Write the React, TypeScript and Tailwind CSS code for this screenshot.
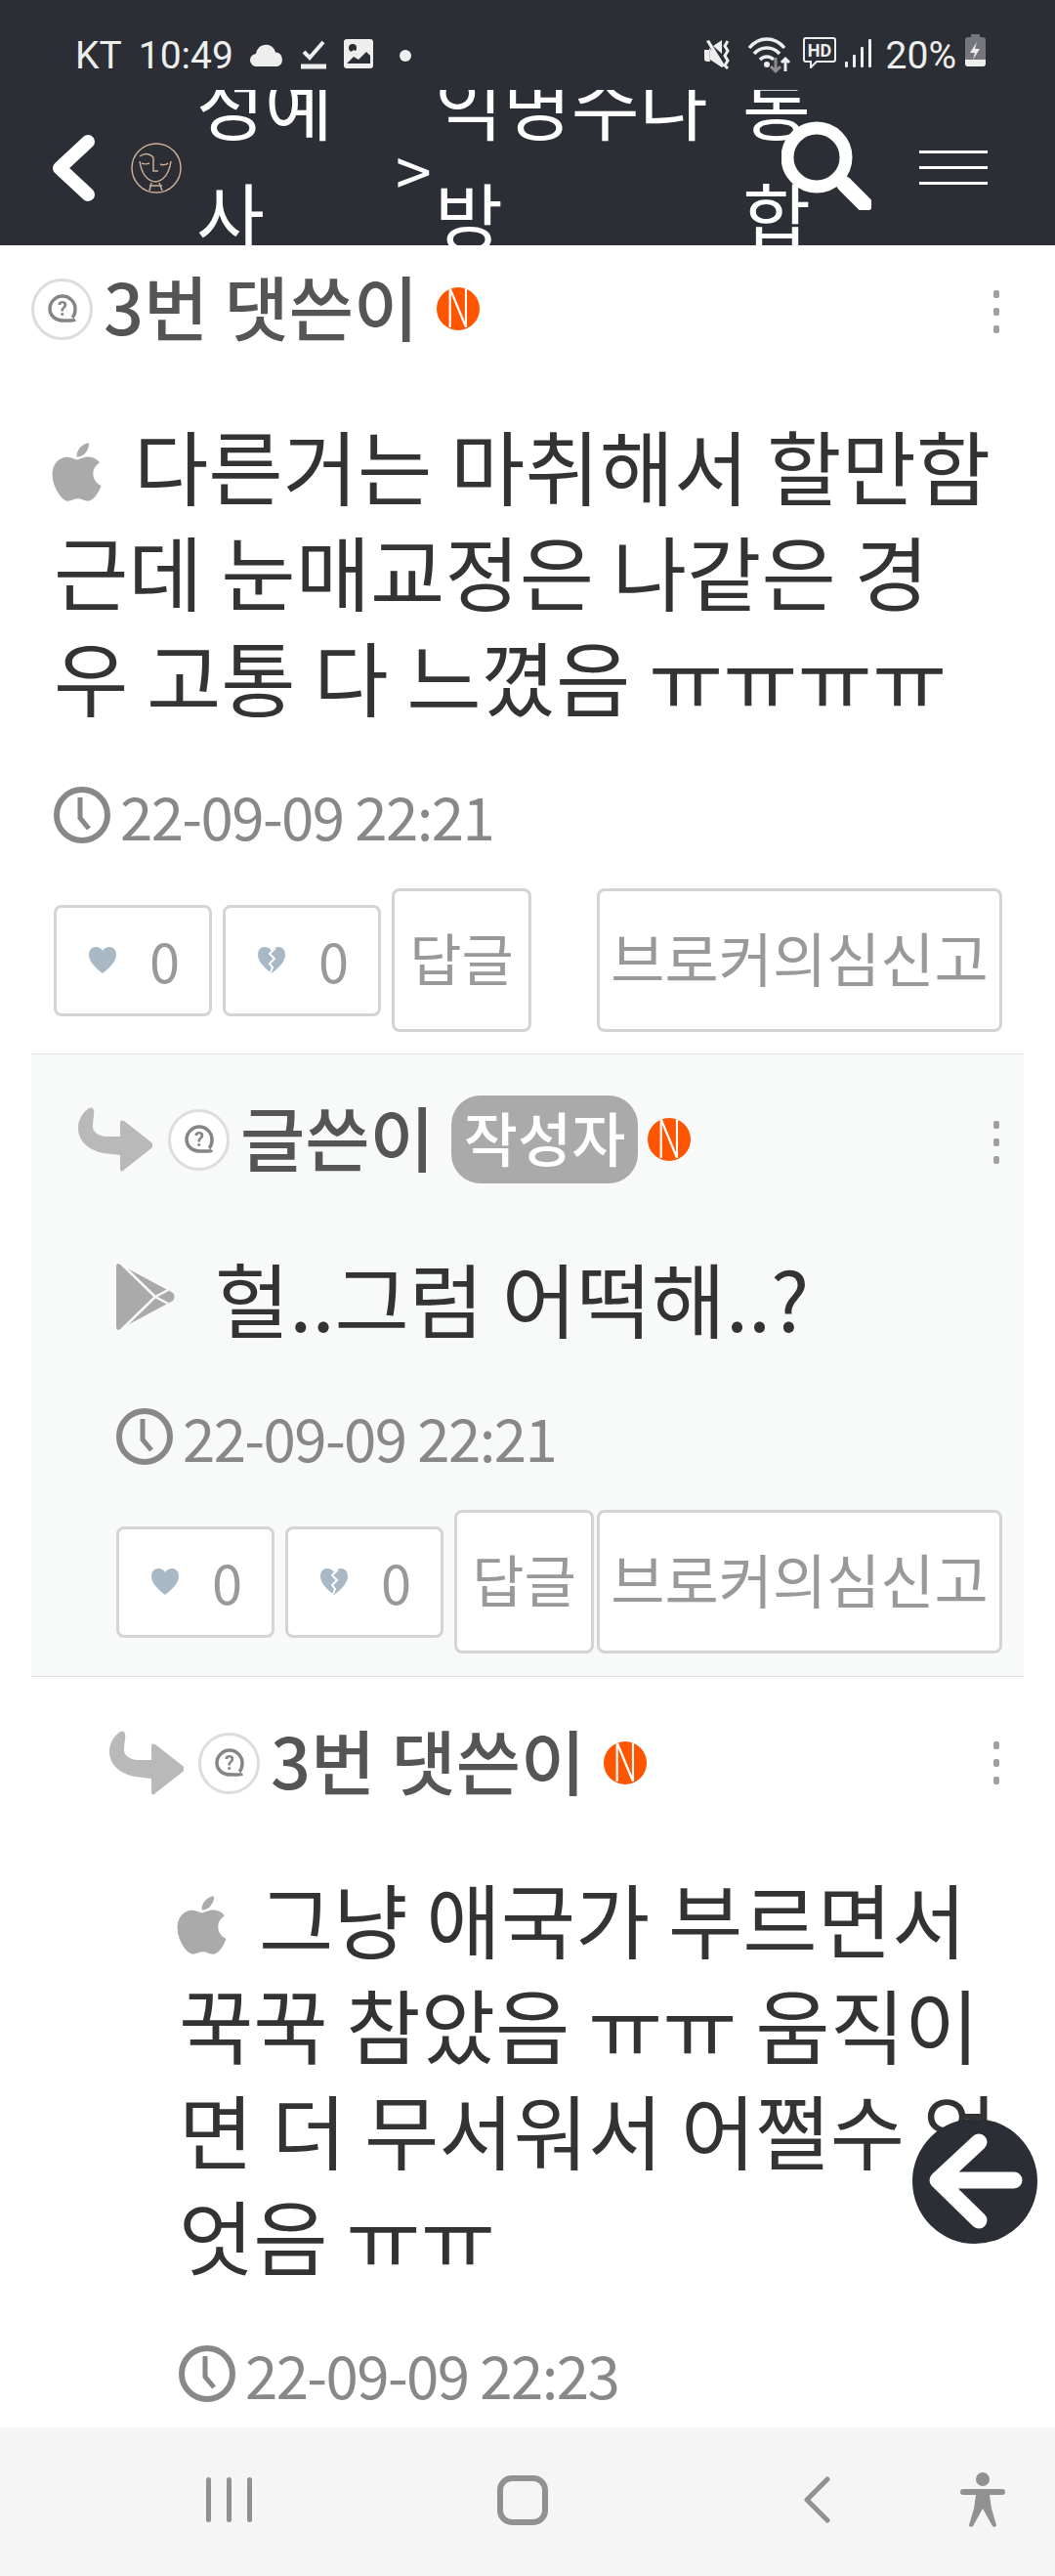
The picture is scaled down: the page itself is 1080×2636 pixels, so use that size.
import { FaApple } from "react-icons/fa";

function StatusBar() {
  return (
    <div className="relative z-10 h-[92px] bg-[#2b2e35] text-[#eeeeee] flex items-start pt-[35px] pl-[77px] pr-[71px] font-['Roboto',sans-serif] text-[39px] leading-[44px]">
      <span>KT</span>
      <span className="ml-[17px]">10:49</span>
      <svg className="ml-[17px] mt-[10px]" width="35" height="24" viewBox="0 0 35 24" fill="#eeeeee">
        <path d="M7 23a6.500 6.500 0 0 1-1-13C7 4 12 0 18 1c4 .5 7 3.500 8 7.500a7.500 7.500 0 0 1 2 14.500z" />
      </svg>
      <svg className="ml-[17px] mt-[6px]" width="26" height="30" viewBox="0 0 26 30" fill="none" stroke="#eeeeee">
        <path d="M3 12l6 6L23 2" strokeWidth="4" />
        <path d="M0 27h26" strokeWidth="5" />
      </svg>
      <svg className="ml-[18px] mt-[5px]" width="30" height="30" viewBox="0 0 30 30">
        <rect width="30" height="30" rx="3" fill="#eeeeee" />
        <circle cx="9" cy="9" r="4" fill="#2b2e35" />
        <path d="M3 25l7-7 5 3 8-8 4 4v8z" fill="#2b2e35" />
        <path d="M3 21l7-7 5 3 8-7 4 4v-4l-4-3-8 7-5-3-7 6z" fill="#eeeeee" />
      </svg>
      <span className="ml-[27px] mt-[16px] w-[12px] h-[12px] rounded-full bg-[#eeeeee]" />
      <svg className="ml-auto mt-[6px]" width="30" height="30" viewBox="0 0 30 30" fill="#eeeeee">
        <path d="M0 10h5l1 12H3a3 3 0 0 1-3-3zM5 8l13 13v7L6 20zM2 1l3-1 16 26-3 2zM9 6l9-6v14z" />
        <path d="M24 1l-3 5 3 5-3 5 3 5-3 5 3 3" fill="none" stroke="#eeeeee" strokeWidth="3" />
      </svg>
      <svg className="ml-[14px] mt-[1px]" width="46" height="40" viewBox="0 0 46 40" fill="none">
        <path d="M2 13c10-12 26-12 36 0M7 19c7-8 19-8 26 0M13 25c4-4 10-4 14 0" stroke="#eeeeee" strokeWidth="3.500" />
        <circle cx="20" cy="30" r="3" fill="#eeeeee" />
        <path d="M29 23v14M24 32l5 5 5-5" stroke="#8d8d8d" strokeWidth="3" />
        <path d="M39 37V24M35 28l4-4 4 4" stroke="#eeeeee" strokeWidth="3" />
      </svg>
      <svg className="ml-[11px] mt-[3px]" width="34" height="32" viewBox="0 0 34 32" fill="none">
        <path d="M3 1h28a2 2 0 0 1 2 2v20a2 2 0 0 1-2 2H14l-6 6v-6H3a2 2 0 0 1-2-2V3a2 2 0 0 1 2-2z" stroke="#eeeeee" strokeWidth="2" />
        <text x="17" y="20" textAnchor="middle" fontSize="18" fontWeight="700" fill="#eeeeee" fontFamily="Roboto, sans-serif">HD</text>
      </svg>
      <svg className="ml-[9px] mt-[5px]" width="27" height="29" viewBox="0 0 27 29" fill="#eeeeee">
        <rect x="0" y="23" width="3" height="6" rx="1" />
        <rect x="8" y="16" width="3" height="13" rx="1" />
        <rect x="16" y="8" width="3" height="21" rx="1" />
        <rect x="24" y="0" width="3" height="29" rx="1" />
      </svg>
      <span className="ml-[15px]">20%</span>
      <svg className="ml-[9px]" width="21" height="33" viewBox="0 0 21 33">
        <path d="M6 0h9v3h3a3 3 0 0 1 3 3v24a3 3 0 0 1-3 3H3a3 3 0 0 1-3-3V6a3 3 0 0 1 3-3h3z" fill="#75777c" />
        <path d="M0 26h21v4a3 3 0 0 1-3 3H3a3 3 0 0 1-3-3z" fill="#eeeeee" />
        <path d="M12 8l-7 11h5l-2 7 7-11h-5z" fill="#eeeeee" />
      </svg>
    </div>
  );
}

function Logo() {
  return (
    <svg className="ml-[37px] shrink-0" width="52" height="52" viewBox="0 0 52 52" fill="none" stroke="#c9ae95" strokeWidth="1.500">
      <circle cx="26" cy="26" r="25" />
      <path d="M9 19c2 13 8 20 16 21 8-1 14-8 16-21" />
      <path d="M9 14c3-2 6-3 9-2 3 1 5 2 5 4v13h5" />
      <path d="M11 21c2 1 6 1 8 0M30 22c2 1 6 1 8-1" />
      <path d="M21 41l-2 8M29 41l3 8M19 44h13" />
    </svg>
  );
}

function Header() {
  return (
    <header className="shrink-0">
      <StatusBar />
      <div className="h-[159px] bg-[#2b2e35] text-white flex items-center overflow-hidden text-[76px] leading-[114px]">
        <svg className="ml-[53px] shrink-0" width="44" height="68" viewBox="0 0 44 68" fill="none" stroke="#ffffff" strokeWidth="14" strokeLinecap="round" strokeLinejoin="round">
          <path d="M37 7L8 34l29 27" />
        </svg>
        <Logo />
        <div className="ml-[15px] mb-[20px] w-[195px] shrink-0 break-all">성예사</div>
        <div className="ml-[9px] w-[40px] shrink-0 text-[66px]">&gt;</div>
        <div className="mb-[20px] w-[300px] shrink-0 break-all">익명수나방</div>
        <div className="ml-[15px] mb-[20px] w-[70px] shrink-0 break-all">통합</div>
        <svg className="-ml-[30px] mt-[-6px] shrink-0" width="92" height="92" viewBox="0 0 92 92" fill="none" stroke="#ffffff">
          <circle cx="36" cy="38" r="30" strokeWidth="13" />
          <path d="M64 65l21 21" strokeWidth="16" strokeLinecap="round" />
        </svg>
        <div className="ml-[49px] w-[70px] shrink-0 flex flex-col gap-[13px]">
          <span className="h-[3px] bg-white" />
          <span className="h-[3px] bg-white" />
          <span className="h-[3px] bg-white" />
        </div>
      </div>
    </header>
  );
}

function Avatar() {
  return (
    <span className="w-[63px] h-[63px] shrink-0 rounded-full border-[3px] border-[#dddddd] bg-white flex items-center justify-center">
      <svg width="34" height="34" viewBox="0 0 34 34" fill="none" stroke="#858585" className="blur-[0.6px]">
        <path d="M30 28c-1 1-4 1-9 1C10 30 4 24 4 17S10 4 17 4s13 6 13 13c0 4-1 7-3 9" strokeWidth="3.500" />
        <text x="17" y="24" textAnchor="middle" fontSize="20" fontWeight="700" fill="#858585" stroke="none" fontFamily="Roboto, sans-serif">?</text>
      </svg>
    </span>
  );
}

function NewBadge() {
  return (
    <span className="w-[44px] h-[44px] shrink-0 rounded-full bg-[#ff5500] text-white flex items-center justify-center overflow-hidden text-[56px] leading-none font-light font-['Roboto',sans-serif]">
      <span className="scale-x-[0.62]">N</span>
    </span>
  );
}

function Kebab({ className }: { className?: string }) {
  return (
    <span className={`ml-auto mr-[25px] flex flex-col gap-[10px] ${className ?? ""}`}>
      <span className="w-[6px] h-[8px] rounded-[2px] bg-[#a0a0a0]" />
      <span className="w-[6px] h-[8px] rounded-[2px] bg-[#a0a0a0]" />
      <span className="w-[6px] h-[8px] rounded-[2px] bg-[#a0a0a0]" />
    </span>
  );
}

function ReplyArrow() {
  return (
    <svg className="shrink-0" width="76" height="67" viewBox="0 0 76 67" fill="#b9b9b9">
      <path d="M11 1C4 6 0 13 0 21c0 15 12 23 26 26l17 2v14c0 3 3 3 4 1l28-22c2-2 2-4 0-6L47 14c-2-1-4-1-4 2v14H28c-8-1-13-5-13-10 0-8 2-14 1-17-1-3-3-3-5-2z" />
    </svg>
  );
}

function Clock() {
  return (
    <svg className="shrink-0" width="58" height="58" viewBox="0 0 58 58" fill="none" stroke="#888888">
      <circle cx="29" cy="29" r="26" strokeWidth="6" />
      <path d="M27 11v21l9 11" strokeWidth="5" />
    </svg>
  );
}

function PlayIcon() {
  return (
    <svg className="shrink-0" width="60" height="68" viewBox="0 0 60 68">
      <path d="M2 0l56 30c2 2 2 6 0 8L2 68c-1 0-2-1-2-3V3c0-2 1-3 2-3z" fill="#aaaaaa" />
      <path d="M6 1l34 33L6 67M40 34l13-7M40 34l13 7" fill="none" stroke="#f7faf9" strokeWidth="2.500" />
    </svg>
  );
}

function TimeRow({ time }: { time: string }) {
  return (
    <div className="mt-[53px] h-[72px] flex items-center gap-[10px] text-[#888888] text-[60px] leading-[72px] tracking-[-0.027em]">
      <Clock />
      <span>{time}</span>
    </div>
  );
}

function VoteButton({ broken }: { broken?: boolean }) {
  return (
    <button className="w-[162px] h-[114px] rounded-[8px] border-[3px] border-[#d4d4d4] bg-white flex items-center pl-[33px] text-[#999999] text-[56px] leading-none shrink-0">
      <svg width="28" height="27" viewBox="0 0 28 27">
        <path d="M14 27C5 20 0 14 0 8c0-5 3-8 7-8 3 0 5 1 7 4 2-3 4-4 7-4 4 0 7 3 7 8 0 6-5 12-14 19z" fill="#a8b8c4" />
        {broken && <path d="M18 1l-6 6 5 5-5 5 3 4-2 5" fill="none" stroke="#ffffff" strokeWidth="2" />}
      </svg>
      <span className="ml-[34px] mb-[2px]">0</span>
    </button>
  );
}

function ActionRow() {
  return (
    <div className="mt-[39px] mr-[22px] flex items-center">
      <VoteButton />
      <span className="ml-[11px]"><VoteButton broken /></span>
      <button className="ml-[11px] w-[143px] h-[147px] pb-[8px] rounded-[8px] border-[3px] border-[#d4d4d4] bg-white text-[#999999] text-[58px] leading-none shrink-0">답글</button>
      <button className="ml-auto w-[415px] h-[147px] pb-[8px] rounded-[8px] border-[3px] border-[#d4d4d4] bg-white text-[#999999] text-[60px] leading-none shrink-0">브로커의심신고</button>
    </div>
  );
}

export default function App() {
  return (
    <div className="w-[1080px] h-[2636px] relative overflow-hidden bg-white flex flex-col font-['Noto_Sans_CJK_KR',sans-serif]">
      <Header />
      <main className="flex-1 overflow-hidden px-[32px] pt-[25px] text-[#333333] text-[83px] leading-[108px]">
        {/* 3번 댓쓴이 */}
        <section className="pb-[22px] border-b-[1px] border-[#e2e2e2]">
          <div className="h-[80px] flex items-center text-[72px]">
            <Avatar />
            <span className="ml-[11px] mb-[8px] text-[#555555] font-medium">3번 댓쓴이</span>
            <span className="ml-[19px]"><NewBadge /></span>
            <Kebab className="mt-[6px]" />
          </div>
          <div className="mt-[65px] pl-[23px]">
            <p className="break-all mr-[22px]">
              <FaApple className="inline-block w-[51px] h-[68px] ml-[-2px] mr-[33px] align-[-6px] text-[#aaaaaa]" />
              다른거는 마취해서 할만함 근데 눈매교정은 나같은 경우 고통 다 느꼈음 ㅠㅠㅠㅠ
            </p>
            <TimeRow time="22-09-09 22:21" />
            <ActionRow />
          </div>
        </section>

        {/* 글쓴이 */}
        <section className="pb-[23px] pt-[47px] bg-[#f7faf9] border-b-[1px] border-[#e2e2e2]">
          <div className="h-[80px] flex items-center pl-[48px] text-[72px]">
            <ReplyArrow />
            <span className="ml-[16px]"><Avatar /></span>
            <span className="ml-[11px] mb-[8px] text-[#555555] font-medium">글쓴이</span>
            <span className="ml-[17px] h-[90px] px-[13px] rounded-[30px] bg-[#aaaaaa] text-white text-[60px] leading-[84px] font-medium">작성자</span>
            <span className="ml-[10px]"><NewBadge /></span>
            <Kebab className="mt-[6px]" />
          </div>
          <div className="mt-[67px] pl-[87px]">
            <p className="flex items-center gap-[41px]">
              <PlayIcon />
              <span>헐..그럼 어떡해..?</span>
            </p>
            <TimeRow time="22-09-09 22:21" />
            <ActionRow />
          </div>
        </section>

        {/* 3번 댓쓴이 대댓글 */}
        <section className="pt-[48px]">
          <div className="h-[80px] flex items-center pl-[80px] text-[72px]">
            <ReplyArrow />
            <span className="ml-[15px]"><Avatar /></span>
            <span className="ml-[11px] mb-[8px] text-[#555555] font-medium">3번 댓쓴이</span>
            <span className="ml-[19px]"><NewBadge /></span>
            <Kebab />
          </div>
          <div className="mt-[64px] pl-[151px]">
            <p className="break-all mr-[22px]">
              <FaApple className="inline-block w-[51px] h-[68px] ml-[-2px] mr-[33px] align-[-6px] text-[#aaaaaa]" />
              그냥 애국가 부르면서 꾹꾹 참았음 ㅠㅠ 움직이면 더 무서워서 어쩔수 없엇음 ㅠㅠ
            </p>
            <TimeRow time="22-09-09 22:23" />
          </div>
        </section>
      </main>

      {/* 플로팅 뒤로가기 */}
      <button className="absolute left-[934px] top-[2168px] w-[128px] h-[128px] rounded-full bg-[#2b2e35]">
        <svg width="128" height="128" viewBox="0 0 128 128" fill="none" stroke="#ffffff" strokeWidth="17" strokeLinecap="round" strokeLinejoin="round">
          <path d="M68 24L26 63l42 41M28 63h76" />
        </svg>
      </button>

      <nav className="shrink-0 h-[152px] bg-[#f5f5f5] flex items-center relative">
        <div className="ml-[211px] mt-[-4px] flex gap-[16px]">
          <span className="w-[5px] h-[46px] rounded-full bg-[#919191]" />
          <span className="w-[5px] h-[46px] rounded-full bg-[#919191]" />
          <span className="w-[5px] h-[46px] rounded-full bg-[#919191]" />
        </div>
        <span className="ml-[251px] mt-[-4px] w-[52px] h-[51px] rounded-[15px] border-[6px] border-[#919191]" />
        <svg className="ml-[261px] mt-[-4px]" width="28" height="48" viewBox="0 0 28 48" fill="none" stroke="#919191" strokeWidth="5" strokeLinecap="round" strokeLinejoin="round">
          <path d="M25 3L4 24l21 21" />
        </svg>
        <svg className="ml-[133px] mt-[-4px]" width="46" height="56" viewBox="0 0 46 56" fill="#919191">
          <circle cx="23" cy="7" r="7" />
          <path d="M3 17h40a3 3 0 0 1 0 6H30l2 14 5 17c0 2-3 2-4 1L23 37 13 55c-1 1-4 1-4-1l5-17 2-14H3a3 3 0 0 1 0-6z" />
        </svg>
      </nav>
    </div>
  );
}
